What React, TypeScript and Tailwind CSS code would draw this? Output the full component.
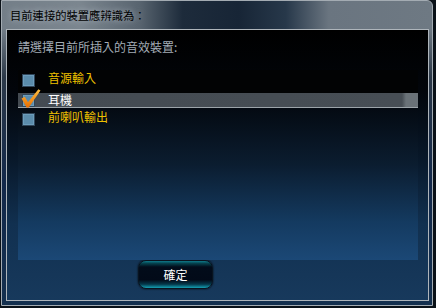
import React from "react";

const CheckBox = () => (
  <div className="w-[13px] h-[13px] shrink-0 border border-[#30465a] bg-[#5b8cab] shadow-[inset_0_0_0_1px_#6c9cba]" />
);

const Tick = () => (
  <svg
    className="absolute left-[2px] top-[18px]"
    width="21"
    height="21"
    viewBox="0 0 21 21"
  >
    <defs>
      <linearGradient id="tick" x1="0" y1="0" x2="0" y2="1">
        <stop offset="0" stopColor="#ffc040" />
        <stop offset="1" stopColor="#e86c00" />
      </linearGradient>
    </defs>
    <path
      d="M1.5 10.5 L4.8 8.8 L8 14.2 L18.4 1.2 L20.5 2.4 L8.8 19.6 L6.6 19.6 Z"
      fill="url(#tick)"
    />
  </svg>
);

const App = () => {
  const devices = [
    { label: "音源輸入", checked: false, selected: false },
    { label: "耳機", checked: true, selected: true },
    { label: "前喇叭輸出", checked: false, selected: false },
  ];

  return (
    <div className="w-[436px] h-[308px] bg-[#0a1118] pl-px pr-[3px] pb-[2px] font-['Noto_Sans_CJK_TC',sans-serif]">
      {/* 外框 */}
      <div className="h-full rounded-tr-[6px] border border-[#a3abb2] flex flex-col pl-[4px] pr-[3px] pb-[4px] bg-[linear-gradient(180deg,rgba(0,0,0,0)_0%,rgba(0,0,0,0)_9%,rgba(14,28,46,0.7)_25%,#12284a_60%,#14304f_100%),linear-gradient(90deg,#737e88_0%,#7b868f_18%,#58646f_32%,#1d2b3b_42%,#172536_55%,#27384a_66%,#6a7580_76%,#6e7983_100%)]">
        <div className="h-[28px] shrink-0 flex items-center pl-[4px] pb-[1px]">
          <span className="text-[11.3px] leading-[14px] text-black [text-shadow:0_0_6px_rgba(190,200,210,0.9)]">
            目前連接的裝置應辨識為：
          </span>
        </div>

        {/* 內部面板 */}
        <div className="flex-1 border border-[#aeb5bb] bg-[linear-gradient(180deg,#000000_0%,#02050a_22%,#08182a_48%,#113050_72%,#17395c_100%)] pl-[11px] pt-[9px]">
          <p className="text-[12px] leading-[16px] text-[#a3acb5]">
            請選擇目前所插入的音效裝置:
          </p>

          <div className="relative mt-[15px] w-[400px] h-[190px] bg-[linear-gradient(180deg,#020306_0%,#040a12_20%,#0b1d30_50%,#143a60_80%,#1b4876_100%)]">
            {/* 第一列 */}
            <div className="h-[23px] flex items-start bg-[#020304]">
              <div className="ml-[4px] mt-[4px]">
                <CheckBox />
              </div>
              <span className="ml-[13px] text-[12px] leading-[16px] text-[#eec000]">
                {devices[0].label}
              </span>
            </div>
            {/* 第二列 (已選取) */}
            <div className="h-[15px] flex items-center border-b border-[#9ca4aa] bg-[linear-gradient(90deg,#444b52_0%,#474e55_96%,#6a7278_97%,#6a7278_100%)]">
              <div className="ml-[4px]">
                <CheckBox />
              </div>
              <span className="ml-[13px] text-[12px] leading-[14px] text-white">
                {devices[1].label}
              </span>
            </div>
            {/* 第三列 */}
            <div className="h-[22px] flex items-start">
              <div className="ml-[4px] mt-[5px]">
                <CheckBox />
              </div>
              <span className="ml-[13px] mt-px text-[12px] leading-[16px] text-[#eec000]">
                {devices[2].label}
              </span>
            </div>
            <Tick />
          </div>

          <div className="pl-[120px]">
            <button className="w-[75px] h-[29px] rounded-[8px] border border-[#08131f] bg-[linear-gradient(180deg,#0f7a8a_0%,#05404c_9%,#020c1a_22%,#020a18_70%,#04384a_86%,#14a0b4_100%)] text-[12px] leading-[16px] text-white shadow-[0_0_2px_#000]">
              確定
            </button>
          </div>
        </div>
      </div>
    </div>
  );
};

export default App;
